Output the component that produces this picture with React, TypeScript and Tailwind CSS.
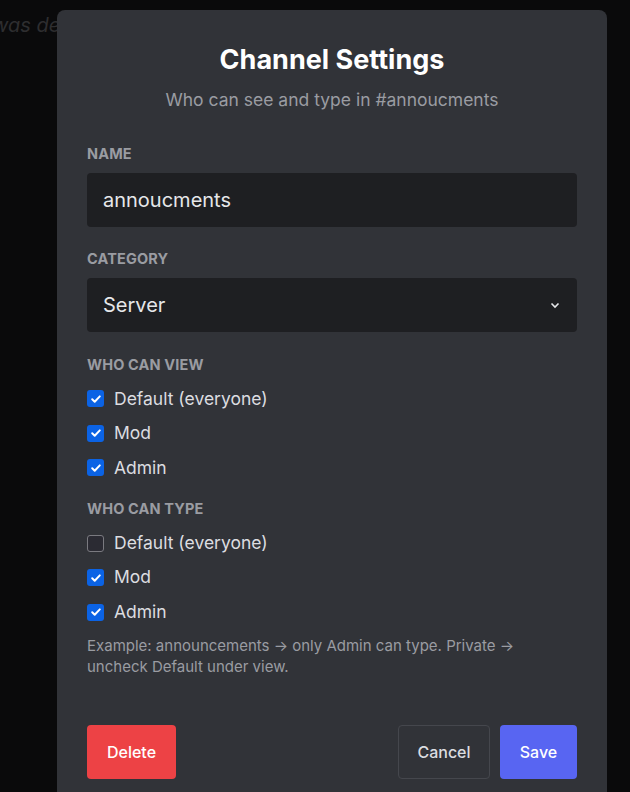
import React from "react";

const Check = ({ on }: { on: boolean }) =>
  on ? (
    <span className="w-[17px] h-[17px] rounded-[3px] bg-[#0b63e5] flex items-center justify-center">
      <svg width="12" height="12" viewBox="0 0 12 12"><path d="M2.2 6.3l2.5 2.4L9.8 3.4" stroke="#fff" strokeWidth="2" fill="none" strokeLinecap="round" strokeLinejoin="round" /></svg>
    </span>
  ) : (
    <span className="w-[17px] h-[17px] rounded-[3px] bg-[#2b2b33] border border-[#7a7a80]" />
  );

const Row = ({ on, label }: { on: boolean; label: string }) => (
  <div className="flex items-center gap-[10px] h-[34.5px] text-[17.5px] text-[#dcdde0]">
    <Check on={on} />
    <span>{label}</span>
  </div>
);

const Label = ({ children }: { children: React.ReactNode }) => (
  <div className="text-[14.5px] font-bold text-[#9a9ca2] uppercase tracking-[0.01em]">{children}</div>
);

export default function App() {
  return (
    <div className="relative w-[630px] h-[792px] overflow-hidden bg-[#0a0a0b]" style={{ fontFamily: "Inter, 'Noto Sans', sans-serif" }}>
      <div className="absolute left-[-8px] top-[10px] text-[20px] italic text-[#2e2e30]">was de</div>
      <div className="absolute left-[57px] top-[10px] w-[550px] h-[800px] rounded-[8px] bg-[#313338] px-[30px] pt-[32px]">
        <h1 className="text-center text-[27px] font-bold text-white leading-[36px]">Channel Settings</h1>
        <p className="text-center text-[17.5px] text-[#9a9ca2] mt-[9px]">Who can see and type in #annoucments</p>
        <div className="mt-[30px]"><Label>Name</Label></div>
        <div className="mt-[8px] h-[54px] rounded-[4px] bg-[#1e1f22] flex items-center px-[16px] text-[20px] text-[#e6e7ea]">annoucments</div>
        <div className="mt-[21px]"><Label>Category</Label></div>
        <div className="mt-[8px] h-[54px] rounded-[4px] bg-[#1e1f22] flex items-center justify-between px-[16px] text-[20px] text-[#e6e7ea]">
          <span>Server</span>
          <svg width="12" height="12" viewBox="0 0 12 12"><path d="M2.5 4.5L6 8l3.5-3.5" stroke="#e6e7ea" strokeWidth="1.6" fill="none" /></svg>
        </div>
        <div className="mt-[22px]"><Label>Who can view</Label></div>
        <div className="mt-[6px]">
          <Row on label="Default (everyone)" />
          <Row on label="Mod" />
          <Row on label="Admin" />
        </div>
        <div className="mt-[13px]"><Label>Who can type</Label></div>
        <div className="mt-[6px]">
          <Row on={false} label="Default (everyone)" />
          <Row on label="Mod" />
          <Row on label="Admin" />
        </div>
        <p className="mt-[6px] pr-[40px] text-[15px] leading-[21px] text-[#9a9ca2]">Example: announcements → only Admin can type. Private → uncheck Default under view.</p>
        <div className="mt-[48px] flex items-center">
          <button className="h-[54px] w-[89px] rounded-[4px] bg-[#ed4245] text-white text-[16px] font-medium">Delete</button>
          <div className="flex-1" />
          <button className="h-[54px] w-[92px] rounded-[4px] border border-[#45474d] text-[#dcdde0] text-[16px] font-medium">Cancel</button>
          <button className="ml-[10px] h-[54px] w-[77px] rounded-[4px] bg-[#5865f2] text-white text-[16px] font-medium">Save</button>
        </div>
      </div>
    </div>
  );
}
